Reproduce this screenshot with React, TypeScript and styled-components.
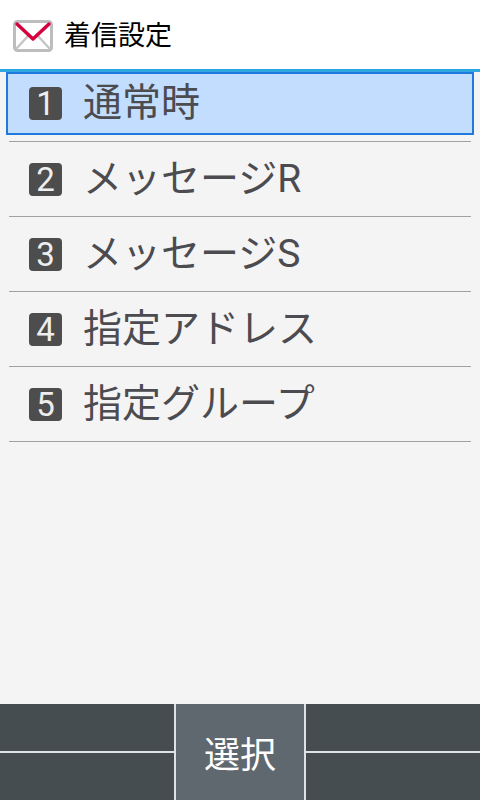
import React from "react";
import styled, { createGlobalStyle } from "styled-components";

const Global = createGlobalStyle`
  html, body { margin: 0; padding: 0; }
  body { background: #f4f4f4; font-family: Roboto, "Noto Sans CJK JP", sans-serif; }
`;

const Screen = styled.div`
  width: 480px;
  height: 800px;
  display: flex;
  flex-direction: column;
  background: #f4f4f4;
  overflow: hidden;
`;

const Header = styled.header`
  height: 66px;
  flex: none;
  background: #fff;
  border-bottom: 3px solid #2ea6e0;
  display: flex;
  align-items: center;
  padding: 3px 0 0 13px;
  gap: 11px;
`;

const Title = styled.h1`
  margin: 0;
  font-size: 27px;
  font-weight: 400;
  color: #000;
  line-height: 1;
`;

const List = styled.ul`
  list-style: none;
  margin: 0;
  padding: 0 6px;
  flex: 1;
`;

const Row = styled.li<{ $selected?: boolean }>`
  box-sizing: border-box;
  height: ${(p) => (p.$selected ? "63px" : "75px")};
  display: flex;
  align-items: center;
  gap: 22px;
  margin: ${(p) => (p.$selected ? "0 0 6px" : "0 3px")};
  padding-left: ${(p) => (p.$selected ? "21px" : "20px")};
  background: ${(p) => (p.$selected ? "#c2ddfe" : "transparent")};
  border: ${(p) => (p.$selected ? "2px solid #1f78dc" : "none")};
  border-top: ${(p) => (p.$selected ? "2px solid #1f78dc" : "1px solid #9ea3a2")};
`;

const LastRule = styled.li`
  height: 1px;
  margin: 0 3px;
  background: #9ea3a2;
`;

const Badge = styled.span`
  width: 33px;
  height: 33px;
  flex: none;
  border-radius: 4px;
  background: #4d4d4d;
  color: #eee;
  font-family: Roboto, sans-serif;
  font-size: 33px;
  line-height: 33px;
  text-align: center;
`;

const Label = styled.span`
  font-size: 39px;
  line-height: 1;
  color: #4b4b50;
  white-space: nowrap;
  margin-left: -1px;
`;

const Footer = styled.footer`
  height: 96px;
  flex: none;
  display: grid;
  grid-template-columns: 174px 132px 174px;
  background: #454d50;
`;

const SideKey = styled.div`
  box-sizing: border-box;
  padding-top: 47px;
`;

const SideRule = styled.div`
  height: 2px;
  background: #dfe2e3;
`;

const SelectKey = styled.button`
  all: unset;
  box-sizing: border-box;
  background: #5f686e;
  border-left: 2px solid #dfe2e3;
  border-right: 2px solid #dfe2e3;
  color: #fff;
  font-size: 36px;
  font-family: Roboto, "Noto Sans CJK JP", sans-serif;
  display: flex;
  align-items: center;
  justify-content: center;
`;

const items = ["通常時", "メッセージR", "メッセージS", "指定アドレス", "指定グループ"];

function MailIcon() {
  return (
    <svg width="40" height="32" viewBox="0 0 40 32" aria-hidden="true">
      <rect x="1.5" y="1.5" width="37" height="29" rx="3" fill="#fff" stroke="#bdbdbd" strokeWidth="3" />
      <path d="M3 29 L15 16 M37 29 L25 16" stroke="#c6c6c6" strokeWidth="2.5" fill="none" />
      <path d="M4 4 L20 19 L36 4" stroke="#d5003c" strokeWidth="3.5" fill="none" strokeLinejoin="round" strokeLinecap="round" />
    </svg>
  );
}

export default function App() {
  return (
    <Screen>
      <Global />
      <Header>
        <MailIcon />
        <Title>着信設定</Title>
      </Header>
      <List>
        {items.map((t, i) => (
          <Row key={t} $selected={i === 0}>
            <Badge>{i + 1}</Badge>
            <Label>{t}</Label>
          </Row>
        ))}
        <LastRule />
      </List>
      <Footer>
        <SideKey>
          <SideRule />
        </SideKey>
        <SelectKey>選択</SelectKey>
        <SideKey>
          <SideRule />
        </SideKey>
      </Footer>
    </Screen>
  );
}
